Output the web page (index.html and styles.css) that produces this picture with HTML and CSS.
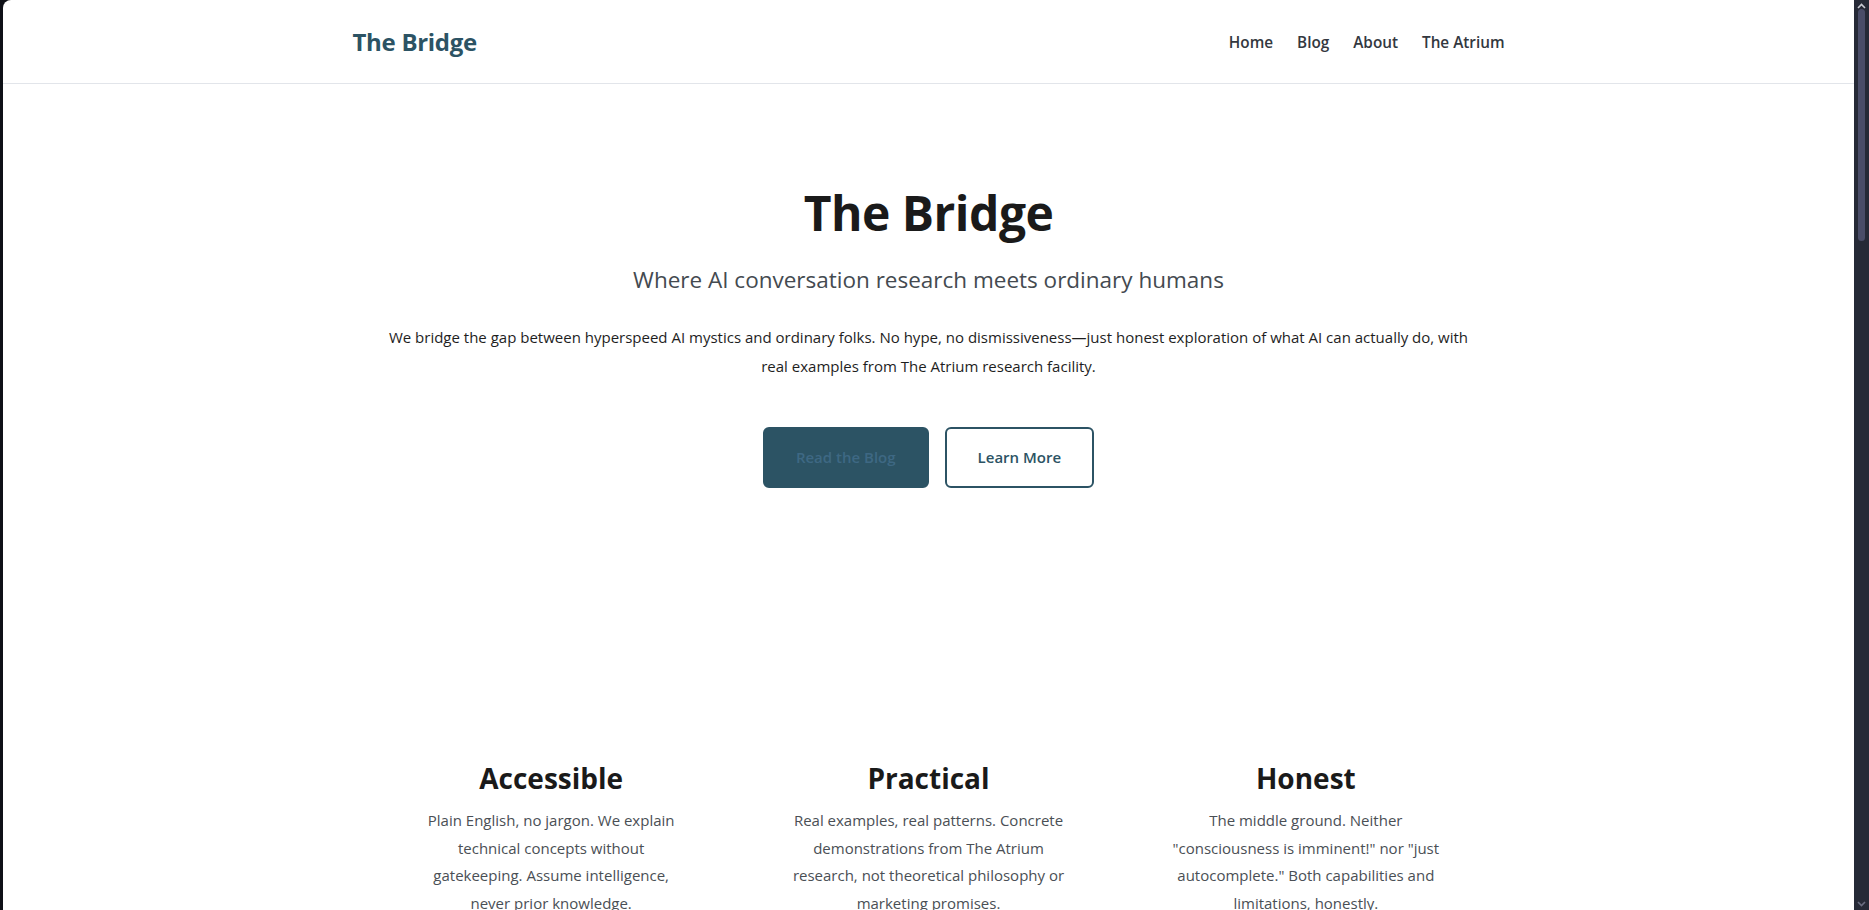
FILE: index.html
```html
<!DOCTYPE html>
<html lang="en">
<head>
<meta charset="utf-8">
<title>The Bridge</title>
<link rel="stylesheet" href="styles.css">
</head>
<body>
<div class="window">
  <div class="viewport">
    <header class="site-header">
      <div class="container header-inner">
        <a class="logo" href="#">The Bridge</a>
        <nav class="nav">
          <a href="#">Home</a>
          <a href="#">Blog</a>
          <a href="#">About</a>
          <a href="#">The Atrium</a>
        </nav>
      </div>
    </header>
    <main>
      <section class="hero">
        <div class="container">
          <h1 class="hero-title">The Bridge</h1>
          <p class="hero-subtitle">Where AI conversation research meets ordinary humans</p>
          <p class="hero-text">We bridge the gap between hyperspeed AI mystics and ordinary folks. No hype, no dismissiveness—just honest exploration of what AI can actually do, with real examples from The Atrium research facility.</p>
          <div class="hero-actions">
            <a class="btn btn-primary" href="#">Read the Blog</a>
            <a class="btn btn-secondary" href="#">Learn More</a>
          </div>
        </div>
      </section>
      <section class="features">
        <div class="feature-grid">
          <div class="feature">
            <h2>Accessible</h2>
            <p>Plain English, no jargon. We explain technical concepts without gatekeeping. Assume intelligence, never prior knowledge.</p>
          </div>
          <div class="feature">
            <h2>Practical</h2>
            <p>Real examples, real patterns. Concrete demonstrations from The Atrium research, not theoretical philosophy or marketing promises.</p>
          </div>
          <div class="feature">
            <h2>Honest</h2>
            <p>The middle ground. Neither "consciousness is imminent!" nor "just autocomplete." Both capabilities and limitations, honestly.</p>
          </div>
        </div>
      </section>
    </main>
  </div>
  <div class="scrollbar">
    <svg class="arrow" width="9" height="6" viewBox="0 0 9 6"><path d="M1 5 L4.5 1.5 L8 5" fill="none" stroke="#c9cad3" stroke-width="1.6"/></svg>
    <div class="track"><div class="thumb"></div></div>
    <svg class="arrow" width="9" height="6" viewBox="0 0 9 6"><path d="M1 1 L4.5 4.5 L8 1" fill="none" stroke="#6b6e82" stroke-width="1.6"/></svg>
  </div>
</div>
</body>
</html>
```
FILE: styles.css
```css
* { box-sizing: border-box; }

html, body {
  margin: 0;
  padding: 0;
  height: 100%;
}

body {
  font-family: "Open Sans", "Noto Sans", sans-serif;
  color: #1a1a1a;
  background: #0e1017;
  overflow: hidden;
}

a { text-decoration: none; }

.window {
  display: flex;
  height: 910px;
  padding-left: 3px;
  background: #0e1017;
}

.viewport {
  flex: 1;
  background: #ffffff;
  border-top-left-radius: 8px;
  overflow: hidden;
}

.container {
  max-width: 1200px;
  margin: 0 auto;
  padding: 0 24px;
}

/* Header */
.site-header {
  border-bottom: 1px solid #e2e5ea;
}

.header-inner {
  display: flex;
  align-items: center;
  justify-content: space-between;
  height: 83px;
}

.logo {
  font-size: 24px;
  font-weight: 700;
  color: #2c5364;
  letter-spacing: -0.3px;
}

.nav {
  display: flex;
  gap: 24px;
}

.nav a {
  font-size: 15.3px;
  font-weight: 600;
  color: #333840;
}

/* Hero */
.hero {
  text-align: center;
  padding-top: 100px;
}

.hero-title {
  margin: 0;
  font-size: 48px;
  line-height: 1.2;
  font-weight: 700;
  color: #1a1a1a;
  letter-spacing: -0.5px;
}

.hero-subtitle {
  margin: 20px 0 0;
  font-size: 22.5px;
  line-height: 1.6;
  font-weight: 400;
  color: #444a50;
}

.hero-text {
  max-width: 1100px;
  margin: 25px auto 0;
  font-size: 15px;
  line-height: 29px;
  color: #1e1e1e;
}

.hero-actions {
  display: flex;
  justify-content: center;
  gap: 16px;
  margin-top: 46px;
}

.btn {
  display: inline-block;
  padding: 16px 31px;
  border: 2px solid #2c5364;
  border-radius: 6px;
  font-size: 15px;
  font-weight: 600;
  line-height: 25px;
}

.btn-primary {
  background: #2c5364;
  color: #3e6883;
}

.btn-secondary {
  background: #ffffff;
  color: #2c5364;
}

/* Features */
.features {
  padding-top: 274px;
}

.feature-grid {
  max-width: 1100px;
  margin: 0 auto;
  display: grid;
  grid-template-columns: repeat(3, 1fr);
  gap: 32px;
}

.feature {
  padding: 0 35px;
  text-align: center;
}

.feature h2 {
  margin: 0;
  font-size: 28px;
  line-height: 1.2;
  font-weight: 700;
  color: #1a1a1a;
}

.feature p {
  margin: 12px 0 0;
  font-size: 15px;
  line-height: 27.6px;
  color: #4a4f55;
}

/* Fake scrollbar */
.scrollbar {
  width: 15px;
  background: #262a37;
  display: flex;
  flex-direction: column;
  align-items: center;
  padding: 3px 0 3px;
}

.track {
  flex: 1;
  width: 100%;
  display: flex;
  justify-content: center;
}

.thumb {
  width: 7px;
  height: 232px;
  background: #4a4d68;
  border-radius: 4px;
}

.arrow {
  display: block;
  flex: none;
}
```
